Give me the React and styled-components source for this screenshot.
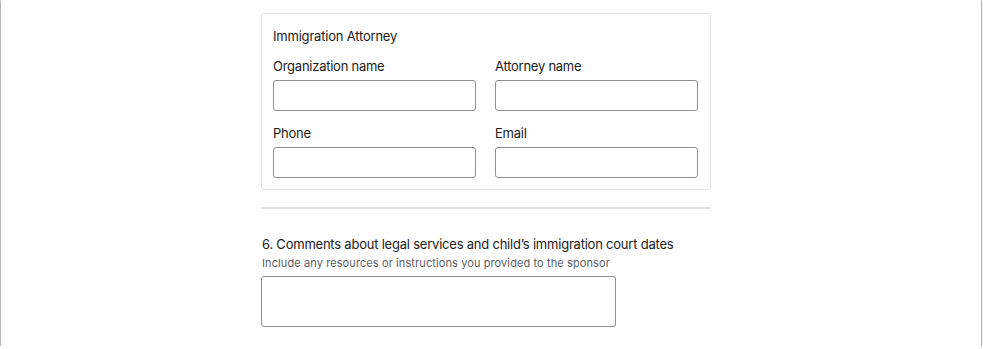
import React from 'react';
import styled, { createGlobalStyle } from 'styled-components';

const GlobalStyle = createGlobalStyle`
  html, body {
    margin: 0;
    padding: 0;
    background: #ffffff;
  }
  body {
    font-family: "Inter", "Liberation Sans", sans-serif;
    color: #1b1b1b;
  }
`;

const Window = styled.div`
  width: 980px;
  height: 346px;
  margin-left: 1px;
  background: #fff;
  box-shadow: 0 1px 0 #8c8c8c, 0 2px 2px rgba(0, 0, 0, 0.45),
    -1px 0 1px rgba(0, 0, 0, 0.18), 1px 0 1px rgba(0, 0, 0, 0.18);
  overflow: hidden;
`;

const Column = styled.div`
  width: 450px;
  margin-left: 260px;
  padding-top: 13px;
`;

const Fieldset = styled.div`
  border: 1px solid #e4e5e7;
  border-radius: 3px;
  padding: 14px 11px 11px;
`;

const Legend = styled.div`
  font-size: 13px;
  line-height: 16px;
  letter-spacing: -0.2px;
  margin-bottom: 14px;
`;

const Grid = styled.div`
  display: grid;
  grid-template-columns: 203px 203px;
  column-gap: 19px;
  row-gap: 14px;
`;

const Field = styled.div`
  display: flex;
  flex-direction: column;
`;

const Label = styled.label`
  font-size: 13px;
  line-height: 16px;
  letter-spacing: -0.25px;
  margin-bottom: 6px;
`;

const Input = styled.input`
  box-sizing: border-box;
  height: 31px;
  width: 100%;
  border: 1px solid #8d8f93;
  border-radius: 3px;
  background: #fff;
  outline: none;
`;

const Divider = styled.hr`
  margin: 17px 0 0;
  border: none;
  height: 2px;
  background: #dfe1e2;
`;

const Question = styled.div`
  padding-left: 1px;
  margin-top: 26px;
  font-size: 13px;
  line-height: 18px;
  letter-spacing: -0.22px;
`;

const Hint = styled.div`
  padding-left: 1px;
  margin-top: 3px;
  font-size: 11px;
  line-height: 14px;
  letter-spacing: 0.1px;
  color: #5c5e63;
`;

const TextArea = styled.textarea`
  display: block;
  box-sizing: border-box;
  margin: 6px 0 0 0;
  width: 355px;
  height: 51px;
  border: 1px solid #8d8f93;
  border-radius: 3px;
  resize: none;
  outline: none;
`;

const fields = ['Organization name', 'Attorney name', 'Phone', 'Email'];

export default function App() {
  return (
    <>
      <GlobalStyle />
      <Window>
        <Column>
          <Fieldset>
            <Legend>Immigration Attorney</Legend>
            <Grid>
              {fields.map((f) => (
                <Field key={f}>
                  <Label>{f}</Label>
                  <Input type="text" />
                </Field>
              ))}
            </Grid>
          </Fieldset>
          <Divider />
          <Question>
            6. Comments about legal services and child’s immigration court dates
          </Question>
          <Hint>Include any resources or instructions you provided to the sponsor</Hint>
          <TextArea />
        </Column>
      </Window>
    </>
  );
}
